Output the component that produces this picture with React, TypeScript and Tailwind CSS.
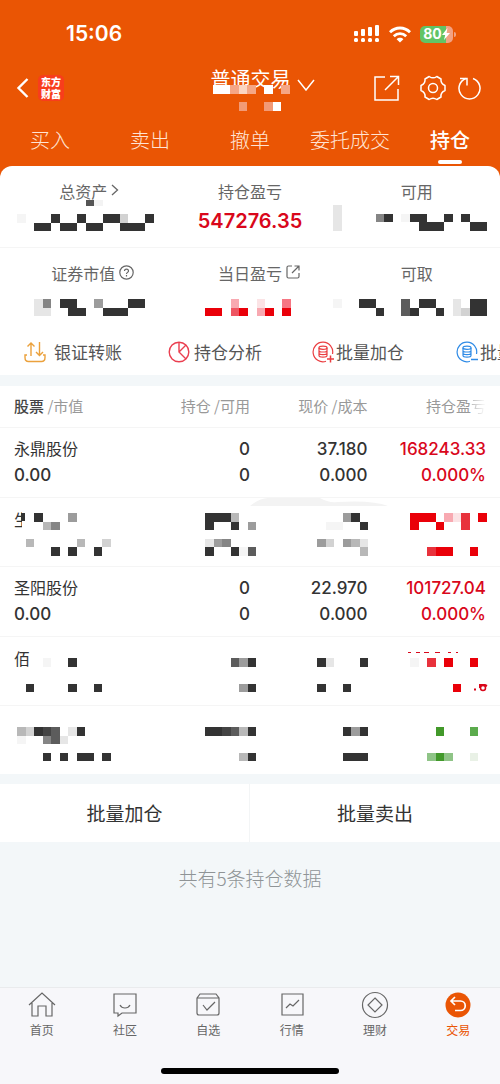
import type { ReactNode } from 'react';

const shades: Record<string, string> = {
  '#': '#333333',
  K: '#444444',
  k: '#5c5c5c',
  m: '#858585',
  n: '#9c9c9c',
  b: '#b8b8b8',
  d: '#d2d2d2',
  e: '#e6e6e6',
  ',': '#f5f5f5',
  R: '#ea0009',
  r: '#e8323c',
  s: '#ee5562',
  q: '#f67683',
  p: '#f8a9b1',
  l: '#fbe3e5',
  G: '#42992a',
  g: '#5bab4d',
  y: '#8fc487',
  z: '#e9f1e6',
  W: '#ffffff',
  w: '#fbd5c2',
  v: '#f5a685',
  u: '#f29a76',
};

const CELL = 8.55;

type MosaicProps = { rows: string[]; cols: number; className?: string; children?: ReactNode };

// Privacy mosaic: one character per block, '.' is left empty
function Mosaic({ rows, cols, className = '', children }: MosaicProps) {
  return (
    <svg
      aria-hidden="true"
      width={Math.round(cols * CELL)}
      height={Math.round(rows.length * CELL)}
      viewBox={`0 0 ${cols} ${rows.length}`}
      preserveAspectRatio="none"
      shapeRendering="crispEdges"
      className={`overflow-visible ${className}`}
    >
      {rows.flatMap((row, y) =>
        row.split('').map((char, x) =>
          shades[char] ? <rect key={`${x}-${y}`} x={x} y={y} width="1" height="1" fill={shades[char]} /> : null,
        ),
      )}
      {children}
    </svg>
  );
}

function StatusBar() {
  return (
    <div className="flex items-center justify-between h-[66px] pt-[2px] pl-[66px] pr-[44px]">
      <span className="font-[Inter] text-[21px] font-semibold">15:06</span>
      <div className="flex items-center gap-[9px]">
        <svg width="26" height="18" viewBox="0 0 26 18" fill="currentColor">
          <rect x="0" y="6" width="4" height="5" rx="1" />
          <rect x="7" y="4" width="4" height="7" rx="1" />
          <rect x="14" y="2" width="4" height="9" rx="1" />
          <rect x="21" y="0" width="4" height="11" rx="1" />
          <rect x="0" y="13" width="4" height="4" rx="1.5" />
          <rect x="7" y="13" width="4" height="4" rx="1.5" />
          <rect x="14" y="13" width="4" height="4" rx="1.5" />
          <rect x="21" y="13" width="4" height="4" rx="1.5" />
        </svg>
        <svg width="22" height="17" viewBox="0 0 22 17" fill="none" stroke="currentColor" strokeWidth="2.8">
          <path d="M1 6.2C6.6.6 15.4.6 21 6.2" />
          <path d="M4.8 10.2c3.5-3.4 8.9-3.4 12.4 0" />
          <path d="M11 16.6l-3.4-3.4c1.9-1.8 4.9-1.8 6.8 0z" fill="currentColor" stroke="none" />
        </svg>
        <div className="flex items-center">
          <div className="flex items-center justify-center w-[33px] h-[17px] rounded-[5px] bg-linear-to-r from-[#62c466] from-80% to-[#f2a183] to-80%">
            <span className="font-[Inter] text-sm leading-4 font-bold">80</span>
            <svg width="8" height="12" viewBox="0 0 8 12" fill="currentColor">
              <path d="M5.5 0L0 7h3.2L2 12l6-7H4.600z" />
            </svg>
          </div>
          <span className="w-[2px] h-[5px] ml-px rounded-r bg-[#f2a183]" />
        </div>
      </div>
    </div>
  );
}

function TitleBar() {
  return (
    <div className="grid grid-cols-3 items-center h-11 pl-4 pr-[19px]">
      <div className="flex items-center gap-[9px]">
        <button type="button" aria-label="返回">
          <svg width="13" height="20" viewBox="0 0 13 20" fill="none" stroke="currentColor" strokeWidth="2.400">
            <path d="M11.500 1L2.500 10l9 9" />
          </svg>
        </button>
        <div className="w-[26px] rounded-[5px] bg-[#f83d1c] py-px text-center text-[10px] leading-3 font-black">
          东方
          <br />
          财富
        </div>
      </div>
      <button type="button" className="relative flex items-center justify-center gap-[6px] pl-7 pb-[18px] text-xl leading-5 whitespace-nowrap">
        普通交易
        <svg width="18" height="12" viewBox="0 0 18 12" fill="none" stroke="currentColor" strokeWidth="1.500" className="mt-3 shrink-0">
          <path d="M1 1l8 10 8-10" />
        </svg>
        <Mosaic cols={9} rows={['WWvwv.W.v', '', '...u..uW']} className="absolute left-1/2 top-[18px] -ml-9" />
      </button>
      <div className="flex items-center justify-end">
        <button type="button" aria-label="分享">
          <svg width="26" height="26" viewBox="0 0 26 26" fill="none" stroke="currentColor" strokeWidth="1.500">
            <path d="M11 2H1v23h23V14" />
            <path d="M11 15L24 2M16 1.500h8.500V10" />
          </svg>
        </button>
        <button type="button" aria-label="设置" className="ml-5">
          <svg width="26" height="26" viewBox="0 0 26 26" fill="none" stroke="currentColor" strokeWidth="1.500" strokeLinejoin="round">
            <path d="M9.200 1.500Q13 4.200 16.800 1.500L21 4Q20.400 8.600 25 10.500V15.500Q20.400 17.400 21 22L16.800 24.500Q13 21.800 9.200 24.500L5 22Q5.600 17.400 1 15.500V10.500Q5.600 8.600 5 4Z" />
            <circle cx="13" cy="13" r="4.500" />
          </svg>
        </button>
        <button type="button" aria-label="刷新" className="ml-3">
          <svg width="23" height="24" viewBox="0 0 23 24" fill="none" stroke="currentColor" strokeWidth="1.500">
            <path d="M15 2.500A10.500 10.500 0 1 1 8 2.500" />
            <path d="M2 2.500h7v7" />
          </svg>
        </button>
      </div>
    </div>
  );
}

const tabs = ['买入', '卖出', '撤单', '委托成交', '持仓'];

function Tabs() {
  return (
    <nav className="grid grid-cols-5 pt-[14px] pb-[2px]">
      {tabs.map((tab) => (
        <button
          key={tab}
          type="button"
          className={
            tab === '持仓'
              ? 'flex flex-col items-center text-xl leading-8 font-medium'
              : 'flex flex-col items-center text-xl leading-8 font-light text-[#ffe4d4]'
          }
        >
          {tab}
          {tab === '持仓' && <span className="w-6 h-1 mt-1 rounded-full bg-white" />}
        </button>
      ))}
    </nav>
  );
}

function Stat({ label, icon, children }: { label: string; icon?: ReactNode; children: ReactNode }) {
  return (
    <div className="relative h-[81px] pt-[13px] text-center">
      <div className="text-base leading-6 text-[#666]">
        <span className="relative">
          {label}
          {icon && <span className="absolute left-full top-1 ml-1">{icon}</span>}
        </span>
      </div>
      {children}
    </div>
  );
}

function Stats() {
  return (
    <section>
      <div className="grid grid-cols-3 border-b border-[#f5f5f5]">
        <Stat
          label="总资产"
          icon={
            <svg width="8" height="14" viewBox="0 0 8 14" fill="none" stroke="currentColor" strokeWidth="1.300">
              <path d="M1 2l5.500 5L1 12" />
            </svg>
          }
        >
          <Mosaic
            cols={18}
            rows={['..,...#..#..##d..#', '....##.##.##..###']}
            className="absolute left-0 top-12"
          >
            <rect x="10" y="-1.600" width="1" height="0.600" fill="#555" />
            <rect x="11" y="-1.600" width="1" height="0.600" fill="#f3f3f3" />
          </Mosaic>
        </Stat>
        <Stat label="持仓盈亏">
          <div className="mt-[6px] font-[Inter] text-xl leading-6 font-semibold text-[#d9071b]">547276.35</div>
        </Stat>
        <Stat label="可用">
          <Mosaic
            cols={18}
            rows={['e', 'e....m#.,##..#.#..', 'e.........###...##']}
            className="absolute left-0 top-[39px]"
          />
        </Stat>
      </div>
      <div className="grid grid-cols-3">
        <Stat
          label="证券市值"
          icon={
            <svg width="15" height="15" viewBox="0 0 15 15" fill="none" stroke="currentColor" strokeWidth="1.200">
              <circle cx="7.500" cy="7.500" r="6.700" />
              <path d="M5.500 6c0-2.600 4-2.600 4 0 0 1.400-2 1.400-2 3M7.500 10v1.400" />
            </svg>
          }
        >
          <Mosaic cols={18} rows={['....em.##..n...##', '....ee..##..###']} className="absolute left-0 top-[51px]" />
        </Stat>
        <Stat
          label="当日盈亏"
          icon={
            <svg width="14" height="14" viewBox="0 0 14 14" fill="none" stroke="currentColor" strokeWidth="1.200">
              <path d="M6 1H2.500Q1 1 1 2.500v9Q1 13 2.500 13h9q1.500 0 1.500-1.500V8" />
              <path d="M6 8l7-7M8.500 1H13v4.500" />
            </svg>
          }
        >
          <Mosaic cols={10} rows={['...p..l..q', 'RR.sR.pR.R']} className="absolute left-[38px] top-[51px]" />
        </Stat>
        <Stat label="可取">
          <Mosaic cols={18} rows={[',..##...k.##..e.##', '.....#..k#..#.ed##']} className="absolute left-0 top-[51px]" />
        </Stat>
      </div>
    </section>
  );
}

function CoinIcon({ minus = false }: { minus?: boolean }) {
  return (
    <svg width="22" height="22" viewBox="0 0 22 22" fill="none" stroke="currentColor" strokeWidth="1.200" className="shrink-0">
      <path d="M14 20.300A9.800 9.800 0 1 1 20.500 13" />
      <ellipse cx="11" cy="6.800" rx="4" ry="1.600" />
      <path d="M7 6.800v7.600c0 2.200 8 2.200 8 0V6.800M7 9.400c0 2.100 8 2.100 8 0M7 12c0 2.100 8 2.100 8 0" />
      {minus ? <path d="M15 18.500h7" strokeWidth="1.500" /> : <path d="M15 18h7M18.500 14.500v7" strokeWidth="1.500" />}
    </svg>
  );
}

function Tools() {
  return (
    <div className="flex overflow-hidden h-[46px] pl-6 text-[17px] text-[#555] whitespace-nowrap">
      <button type="button" className="flex items-center gap-2 w-36 shrink-0">
        <svg width="22" height="22" viewBox="0 0 22 22" fill="none" stroke="#eba13c" strokeWidth="1.400" className="shrink-0">
          <path d="M3 14H1v2.500Q1 20.500 4.500 20.500h13q3.500 0 3.500-4V14h-2" />
          <path d="M7 15V2M3.500 5.500L7 2l3.500 3.500M15.500 1v13.500M12 11l3.500 3.500L19 11" />
        </svg>
        银证转账
      </button>
      <button type="button" className="flex items-center gap-1 w-36 shrink-0">
        <svg width="22" height="22" viewBox="0 0 22 22" fill="none" stroke="#ea3f50" strokeWidth="1.400" className="shrink-0">
          <circle cx="11" cy="11" r="9.800" />
          <path d="M11 1.200V11l7 7M11 11l7-7" />
        </svg>
        持仓分析
      </button>
      <button type="button" className="flex items-center gap-[2px] w-36 shrink-0">
        <span className="text-[#ea3f42]">
          <CoinIcon />
        </span>
        批量加仓
      </button>
      <button type="button" className="flex items-center gap-[2px] w-36 shrink-0">
        <span className="text-[#2f8be6]">
          <CoinIcon minus />
        </span>
        批量卖出
      </button>
    </div>
  );
}

function StockRow({ name, price, profit }: { name: string; price: string; profit: string }) {
  return (
    <tr className="h-[70px] border-t border-[#f5f5f5] font-[Inter,'Noto_Sans_CJK_SC',sans-serif] text-[17px] font-medium text-[#333]">
      <td className="pl-[14px] text-left">
        <div className="text-base leading-[26px] font-normal">{name}</div>
        0.00
      </td>
      <td>
        0
        <br />0
      </td>
      <td>
        {price}
        <br />
        0.000
      </td>
      <td className="pr-[14px] text-[#d9071b]">
        {profit}
        <br />
        0.000%
      </td>
    </tr>
  );
}

type HiddenRowProps = { name?: ReactNode; cells: string[][]; pad: string; extra?: ReactNode };

function HiddenRow({ name, cells, pad, extra }: HiddenRowProps) {
  return (
    <tr className="h-[69px] border-t border-[#f5f5f5] align-top text-[#333]">
      <td className={`relative ${pad}`}>
        {name}
        <Mosaic cols={13} rows={cells[0]} />
      </td>
      <td className={pad}>
        <Mosaic cols={6} rows={cells[1]} className="ml-auto -mr-[6px]" />
      </td>
      <td className={pad}>
        <Mosaic cols={6} rows={cells[2]} className="ml-auto" />
      </td>
      <td className={`relative pr-[13px] ${pad}`}>
        <Mosaic cols={9} rows={cells[3]} className="ml-auto" />
        {extra}
      </td>
    </tr>
  );
}

function Holdings() {
  return (
    <table className="w-full table-fixed mt-[11px] bg-white text-base leading-[26px] text-right">
      <thead>
        <tr className="h-[41px] text-[15px] text-[#999]">
          <th className="w-[26%] pl-[14px] text-left font-normal">
            <span className="font-medium text-[#444]">股票</span> /市值
          </th>
          <th className="w-[24%] font-normal">持仓 /可用</th>
          <th className="w-[23.5%] font-normal">现价 /成本</th>
          <th className="w-[26.5%] pr-[14px] font-normal">
            持仓盈<span className="bg-linear-to-r from-[#bbb] to-white bg-clip-text text-transparent">亏</span>
          </th>
        </tr>
      </thead>
      <tbody>
        <StockRow name="永鼎股份" price="37.180" profit="168243.33" />
        <HiddenRow
          pad="pt-[15px]"
          name={
            <>
              <span className="absolute left-[14px] top-2 w-2 overflow-hidden">生</span>
              <span className="absolute left-[21px] top-[15px] w-1 h-2 bg-[#333]" />
            </>
          }
          cells={[
            ['....#...n', '.....bm', '', '...b.....b..d', '......#.#..#'],
            ['###b', '#..#.n', '', 'enm', '#..#,k'],
            ['...n#.', '.,,..#', '', 'nd.nbe', '.....b'],
            ['RRR.plr.R', 'R..R..r', '', '', '..rRR..R'],
          ]}
          extra={
            <svg width="138" height="8" viewBox="0 0 138 8" fill="#f3f3f3" className="absolute right-[112px] top-0">
              <path d="M0 8Q8 1 18 0h52q8 5 18 4 35-2 50 4z" />
            </svg>
          }
        />
        <StockRow name="圣阳股份" price="22.970" profit="101727.04" />
        <HiddenRow
          pad="pt-[21px]"
          name={<span className="absolute left-[14px] top-2">佰</span>}
          cells={[
            ['.....,..#', '', '', '...#....#..#'],
            ['...kn#', '', '', '....n#'],
            ['#e...#', '', '', '#..#'],
            [',.r.R..R', '', '', '.....R'],
          ]}
          extra={
            <svg width="82" height="44" viewBox="0 0 82 44" fill="none" stroke="#d9071b" className="absolute right-[12px] top-[14px]">
              <path d="M2 1.500h3M10 1.500h4M18 1.500h5M29 1.500h5M42 1.500h3M50 1.500h2" strokeWidth="1" />
              <path d="M68 38.500h2M73 34h6l2 1M74 34v3" strokeWidth="2" />
              <circle cx="77" cy="37" r="2.500" strokeWidth="1.500" />
            </svg>
          }
        />
        <HiddenRow
          pad="pt-[21px]"
          cells={[
            ['..bd#Kk.e#', '..,..mke', '', '.....#.#.##.#'],
            ['##Kkb#', '', '', '....b#'],
            ['...#n#', '', '', '...###'],
            ['...G...g', '', '', '..yGy..z'],
          ]}
        />
      </tbody>
    </table>
  );
}

const navItems = [
  { label: '首页', icon: <path d="M1 14L14 2l13 12M4 12v13h6V15h8v10h6V12" /> },
  { label: '社区', icon: <path d="M3 3h22v19H11l-4 3v-3H3zM9 14c2 4 8 4 10 0" /> },
  {
    label: '自选',
    icon: <path d="M3 7l3-4h16l3 4v15q0 2-2 2H5q-2 0-2-2zM3 7h22M9 14l4 5 8-8" />,
  },
  { label: '行情', icon: <path d="M4 3h21v21H4zM8 17l4-4 3 2 6-6" /> },
  {
    label: '理财',
    icon: (
      <>
        <circle cx="14" cy="14" r="12.500" />
        <path d="M14 7l7 7-7 7-7-7z" />
      </>
    ),
  },
  {
    label: '交易',
    icon: (
      <>
        <circle cx="14" cy="14" r="12.500" fill="#ea5504" stroke="none" />
        <path d="M11 6L7 10l4 4M7 10h9.500a4.700 4.700 0 0 1 0 9.500H11" stroke="#fff" strokeWidth="1.700" />
      </>
    ),
  },
];

function BottomNav() {
  return (
    <footer className="border-t border-[#e9ebed] bg-[#f7f7fa] pb-[10px]">
      <nav className="grid grid-cols-6 pt-[3px]">
        {navItems.map((item) => (
          <a
            key={item.label}
            href="#"
            className={
              item.label === '交易'
                ? 'flex flex-col items-center text-xs leading-5 text-[#ea5504]'
                : 'flex flex-col items-center text-xs leading-5 text-[#666]'
            }
          >
            <svg width="28" height="28" viewBox="0 0 28 28" fill="none" stroke="currentColor" strokeWidth="1.200" className="mb-px">
              {item.icon}
            </svg>
            {item.label}
          </a>
        ))}
      </nav>
      <div className="w-[178px] h-[6px] mt-[28px] mx-auto rounded-full bg-black" />
    </footer>
  );
}

export default function App() {
  return (
    <div className="flex flex-col min-h-screen bg-[#f3f7f9] font-['Noto_Sans_CJK_SC',sans-serif]">
      <header className="bg-[#ea5504] text-white">
        <StatusBar />
        <TitleBar />
        <Tabs />
      </header>

      <main className="flex-1">
        <div className="bg-[#ea5504]">
          <div className="rounded-t-xl bg-white">
            <Stats />
            <Tools />
          </div>
        </div>
        <Holdings />
        <div className="grid grid-cols-2 mt-[10px] bg-white text-[19px] text-[#333]">
          <button type="button" className="h-[58px] border-r border-[#f3f5f6]">批量加仓</button>
          <button type="button" className="h-[58px]">批量卖出</button>
        </div>
        <p className="mt-[22px] text-center text-[19px] leading-7 font-light text-[#8f9496]">共有5条持仓数据</p>
      </main>

      <BottomNav />
    </div>
  );
}
